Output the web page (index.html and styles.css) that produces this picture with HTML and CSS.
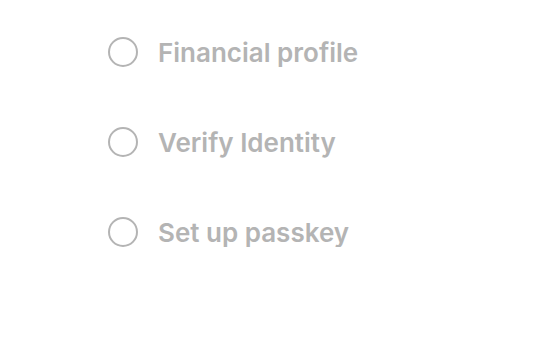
FILE: index.html
```html
<!DOCTYPE html>
<html>

<head>
    <link rel="stylesheet" href="styles.css">
</head>

<body>
    <ul class="steps">
        <li class="step">
            <span class="step-dot"></span>
            <span class="step-label">Financial profile</span>
        </li>
        <li class="step">
            <span class="step-dot"></span>
            <span class="step-label">Verify Identity</span>
        </li>
        <li class="step">
            <span class="step-dot"></span>
            <span class="step-label">Set up passkey</span>
        </li>
    </ul>
</body>

</html>
```

FILE: styles.css
```css
body {
    margin: 0;
    background-color: #fff;
    font-family: Inter, "Noto Sans", sans-serif;
}

.steps {
    list-style-type: none;
    margin: 0;
    padding: 37px 0 0 108px;
    display: flex;
    flex-direction: column;
    gap: 60px;
}

.step {
    display: flex;
    align-items: center;
    gap: 20px;
    height: 30px;
}

.step-dot {
    box-sizing: border-box;
    width: 30px;
    height: 30px;
    border: 2.5px solid #b4b4b4;
    border-radius: 50%;
    flex-shrink: 0;
}

.step-label {
    font-size: 26px;
    font-weight: 600;
    color: #b4b4b4;
    letter-spacing: 0;
}
```
